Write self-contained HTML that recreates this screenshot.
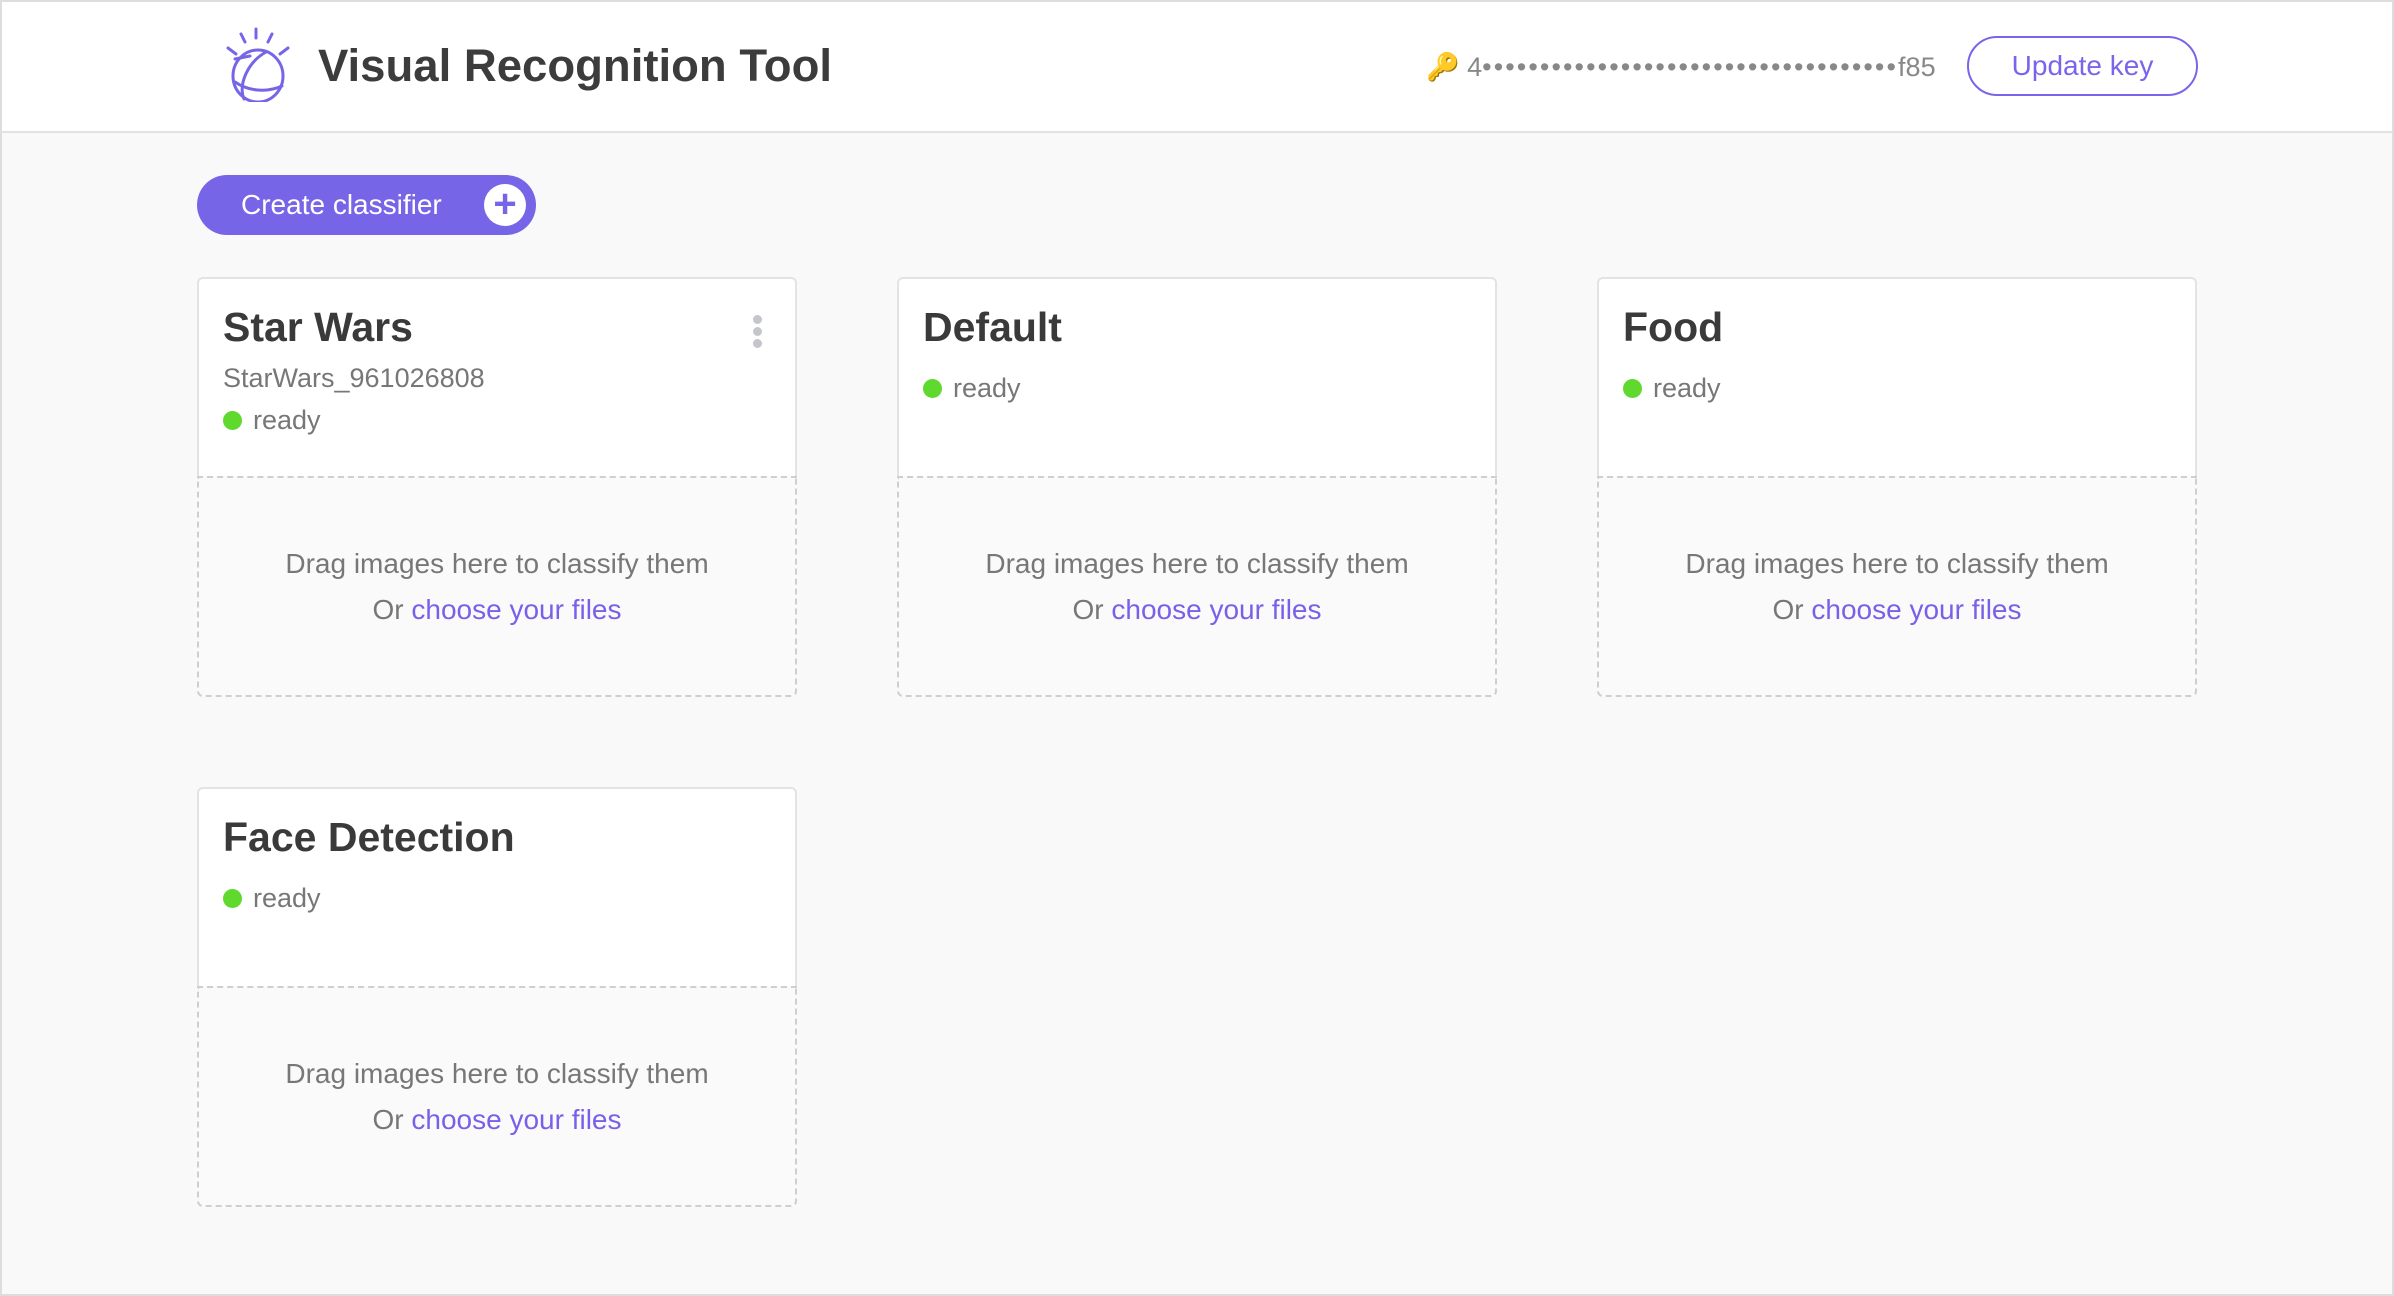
<!DOCTYPE html>
<html><head><meta charset="utf-8"><style>
*{box-sizing:border-box;margin:0;padding:0}
body{width:2394px;height:1296px;background:#f9f9f9;font-family:"Liberation Sans",Arial,sans-serif;position:relative;overflow:hidden;border:2px solid #ddd}
.hdr{position:absolute;left:-2px;top:-2px;width:2394px;height:133px;background:#fff;border:2px solid #ddd;border-bottom:2px solid #e2e2e2}
.title{position:absolute;left:316px;top:38px;font-size:45.5px;font-weight:bold;color:#3c3c3c}
.key{position:absolute;left:1424px;top:49px;font-size:27px;color:#888}
.key span{letter-spacing:2.1px}
.upd{position:absolute;left:1965px;top:34px;width:231px;height:60px;border:2px solid #7a64eb;border-radius:30px;color:#7a64eb;font-size:28px;text-align:center;line-height:56px}
.create{position:absolute;left:195px;top:173px;width:339px;height:60px;background:#7765e8;border-radius:30px;color:#fff;font-size:28px;line-height:60px;padding-left:44px}
.plus{position:absolute;right:10px;top:9px;width:42px;height:42px;border-radius:50%;background:#fff;color:#7765e8;font-size:40px;line-height:40px;text-align:center;font-weight:bold}
.card{position:absolute;width:600px;height:420px;border-radius:6px}
.top{position:absolute;left:0;top:0;width:600px;height:200px;background:#fff;border:2px solid #e3e3e3;border-bottom:none;border-radius:6px 6px 0 0}
.drop{position:absolute;left:0;top:199px;width:600px;height:221px;border:2px dashed #cfcfcf;border-radius:0 0 6px 6px;text-align:center;color:#777;font-size:28px;padding-top:63px;line-height:46px;background:#fafafa}
.drop a{color:#7a5fe9;text-decoration:none}
.h{position:absolute;left:24px;top:25px;font-size:41px;font-weight:bold;color:#3a3a3a}
.sub{position:absolute;left:24px;top:84px;font-size:27px;color:#777}
.st{position:absolute;left:24px;font-size:27px;color:#777}
.st i{display:inline-block;width:19px;height:19px;border-radius:50%;background:#5fd92e;margin-right:11px;vertical-align:-1px}
.keb{position:absolute;left:554px;top:36px;width:9px}
.keb b{display:block;width:9px;height:9px;border-radius:50%;background:#c4c6cc;margin-bottom:3px}
</style></head><body>
<div class="hdr">
<svg style="position:absolute;left:206px;top:24px" width="92" height="76" viewBox="0 0 92 76">
<g stroke="#7765e8" stroke-width="3" fill="none" stroke-linecap="round">
<line x1="48" y1="3" x2="48" y2="12"/><line x1="33" y1="8" x2="37" y2="16"/><line x1="64" y1="8" x2="60" y2="16"/>
<line x1="20" y1="22" x2="28" y2="28"/><line x1="80" y1="22" x2="72" y2="28"/>
<ellipse cx="50" cy="50" rx="25" ry="26"/>
<path d="M58 26 C40 36 30 58 36 73"/><path d="M27 56 C40 65 58 67 74 60"/><path d="M27 33 L42 30"/>
</g></svg>
<div class="title">Visual Recognition Tool</div>
<div class="key">🔑 4<span>••••••••••••••••••••••••••••••••••••</span>f85</div>
<div class="upd">Update key</div>
</div>
<div class="create">Create classifier<div class="plus">+</div></div>

<div class="card" style="left:195px;top:275px"><div class="top"><div class="h">Star Wars</div><div class="keb"><b></b><b></b><b></b></div><div class="sub">StarWars_961026808</div><div class="st" style="top:126px"><i></i>ready</div></div>
<div class="drop">Drag images here to classify them<br>Or <a>choose your files</a></div></div>

<div class="card" style="left:895px;top:275px"><div class="top"><div class="h">Default</div><div class="st" style="top:94px"><i></i>ready</div></div>
<div class="drop">Drag images here to classify them<br>Or <a>choose your files</a></div></div>

<div class="card" style="left:1595px;top:275px"><div class="top"><div class="h">Food</div><div class="st" style="top:94px"><i></i>ready</div></div>
<div class="drop">Drag images here to classify them<br>Or <a>choose your files</a></div></div>

<div class="card" style="left:195px;top:785px"><div class="top"><div class="h">Face Detection</div><div class="st" style="top:94px"><i></i>ready</div></div>
<div class="drop">Drag images here to classify them<br>Or <a>choose your files</a></div></div>
</body></html>
